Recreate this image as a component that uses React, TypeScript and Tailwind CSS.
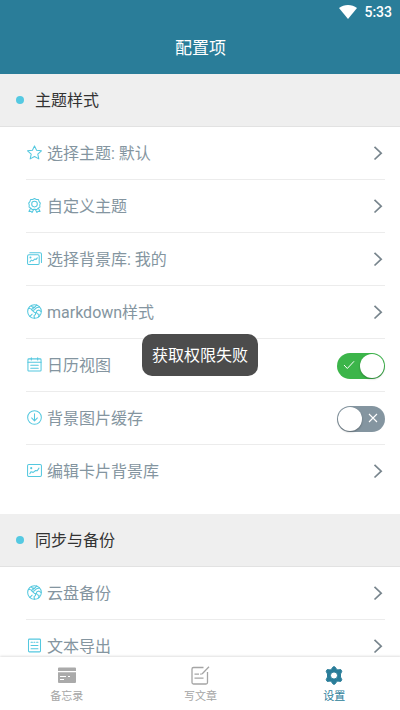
import type { ReactNode } from "react";

type IconName =
  | "star"
  | "badge"
  | "gallery"
  | "globe"
  | "calendar"
  | "download"
  | "picture"
  | "document";

interface SettingItem {
  label: string;
  icon: IconName;
  checked?: boolean; // rows with a value show a switch instead of the arrow
}

const themeItems: SettingItem[] = [
  { label: "选择主题: 默认", icon: "star" },
  { label: "自定义主题", icon: "badge" },
  { label: "选择背景库: 我的", icon: "gallery" },
  { label: "markdown样式", icon: "globe" },
  { label: "日历视图", icon: "calendar", checked: true },
  { label: "背景图片缓存", icon: "download", checked: false },
  { label: "编辑卡片背景库", icon: "picture" },
];

const backupItems: SettingItem[] = [
  { label: "云盘备份", icon: "globe" },
  { label: "文本导出", icon: "document" },
];

const iconShapes: Record<IconName, ReactNode> = {
  star: (
    <path d="M8 .9l2.200 4.700 5.200.6-3.900 3.500 1.100 5.100L8 12.200l-4.600 2.600 1.100-5.100L.6 6.200l5.200-.6z" />
  ),
  badge: (
    <>
      <path d="M8 .6l2 .9 2.200.2.700 2.100 1.300 1.700-.6 2 .2 2.200-1.900 1.100-1.300 1.500L8 11.900l-2.600.4-1.300-1.500-1.900-1.100.2-2.200-.6-2 1.300-1.700.7-2.100L6 1.500z" />
      <circle cx="8" cy="6.500" r="3" />
      <path d="M3.800 11L2 14.300l2.300-.1 1.100 1.300 1.700-3.300M12.200 11l1.800 3.300-2.300-.1-1.100 1.300-1.700-3.300" />
    </>
  ),
  gallery: (
    <>
      <rect x=".6" y="4" width="12.400" height="10.500" rx="1.500" />
      <path d="M3 1.800h10.900c.9 0 1.500.6 1.500 1.500v9M3 11.700l1.600-2 1.600.8 2.200-2 1.300.5 1.300-1.700" />
      <circle cx="3.700" cy="7" r=".5" />
    </>
  ),
  globe: (
    <>
      <circle cx="8" cy="8" r="7.300" />
      <path d="M1.700 4.500l2.600.7 1.200 1.600 2.200 1.900 1.600.7-.4 2-1.400 1 .4 2.700M4.600 1.900l1.600 1.700L8.800 3l1.500-2.100M13.300 3.300l-3 .6-2.300 2.200-1.500.5M5.300 5.500l3-2M15 8l-2.200-1.500-2.300.8-.6 1.700 1.500 1.700 1.500.3-.6 2.800M3.200 13.200l2.300-2.300" />
    </>
  ),
  calendar: (
    <>
      <rect x="1" y="2" width="14" height="13" rx="1" />
      <path d="M1 5.500h14M4.600.8v2.400M11.400.8v2.400M4 8.700h8M4 11.900h8" />
    </>
  ),
  download: (
    <>
      <circle cx="8" cy="8" r="7.300" />
      <path d="M8 4v7.500M4.900 8.500L8 11.600l3.100-3.100" />
    </>
  ),
  picture: (
    <>
      <rect x=".6" y="1.600" width="14.800" height="12.800" rx="1.400" />
      <path d="M3 11.400l1.200-2 2.400.6 2.600-2 1.700.3 1.900-2.800" />
      <circle cx="4.500" cy="5.500" r=".6" />
    </>
  ),
  document: (
    <>
      <rect x="1.600" y="1.200" width="12.800" height="13.600" rx="1" />
      <path d="M4.300 4.500h1.500M7.400 4.500h1M10.200 4.500h1.500M4.300 8h7.400M4.300 11.500h7.400" />
    </>
  ),
};

const ItemIcon = ({ name }: { name: IconName }) => (
  <svg
    viewBox="0 0 16 16"
    className="mr-[5.5px] mb-px ml-[0.5px] h-[15px] w-[15px] shrink-0 fill-none stroke-[#54c8df]"
    strokeWidth="1.1"
    strokeLinejoin="round"
    strokeLinecap="round"
  >
    {iconShapes[name]}
  </svg>
);

const Arrow = () => (
  <svg
    viewBox="0 0 10 16"
    className="h-4 w-2.5 fill-none stroke-[#78858d]"
    strokeWidth="1.7"
  >
    <path d="M1.500 1.800L8.200 8.200l-6.700 6.300" />
  </svg>
);

const Toggle = ({ checked }: { checked: boolean }) => (
  <button
    type="button"
    role="switch"
    aria-checked={checked}
    className={`mt-px flex h-[26px] w-12 items-center rounded-full px-px ${
      checked ? "justify-end bg-[#3cb54a]" : "bg-[#8495a0]"
    }`}
  >
    {checked && (
      <svg
        viewBox="0 0 12 10"
        className="mr-[5px] mb-px h-2.5 w-3 fill-none stroke-white"
        strokeWidth="1"
      >
        <path d="M1 5l3.300 3.500L11 1.300" />
      </svg>
    )}
    <span className="h-6 w-6 rounded-full bg-white shadow-[0_1px_2px_rgba(0,0,0,0.3)]" />
    {!checked && (
      <svg
        viewBox="0 0 10 10"
        className="mb-0.5 ml-[6px] h-2.5 w-2.5 fill-none stroke-white"
        strokeWidth="1.1"
      >
        <path d="M1 1l8 8M9 1L1 9" />
      </svg>
    )}
  </button>
);

const SectionTitle = ({ title }: { title: string }) => (
  <h2 className="flex h-[53px] items-center border-b border-[#e2e2e2] bg-[#efefef] pl-4 text-base text-[#333]">
    <span className="mr-[11px] h-2 w-2 rounded-full bg-[#55c9e2]" />
    <span className="pt-0.5">{title}</span>
  </h2>
);

const SettingList = ({ items }: { items: SettingItem[] }) => (
  <ul className="mr-[15px] ml-[26px]">
    {items.map((item) => (
      <li
        key={item.label}
        className="flex h-[53px] items-center border-b border-[#ececec] text-base text-[#8495a0] last:border-transparent"
      >
        <ItemIcon name={item.icon} />
        <span className="flex-1 pt-0.5">{item.label}</span>
        {item.checked === undefined ? (
          <span className="mr-0.5">
            <Arrow />
          </span>
        ) : (
          <Toggle checked={item.checked} />
        )}
      </li>
    ))}
  </ul>
);

const CardIcon = () => (
  <svg viewBox="0 0 20 20" className="h-5 w-5">
    <path
      className="fill-[#aaa]"
      d="M2 1.500h16a1 1 0 011 1V5H1V2.500a1 1 0 011-1zM1 6.300h18V16a1 1 0 01-1 1H2a1 1 0 01-1-1z"
    />
    <path className="fill-none stroke-white" d="M3 10.500h6M11 10.500h2M3 13.500h4" />
  </svg>
);

const WriteIcon = () => (
  <svg
    viewBox="0 0 20 20"
    className="h-5 w-5 fill-none stroke-[#a5a5a5]"
    strokeWidth="1.3"
  >
    <path d="M13.500 1.500h-10A1.500 1.500 0 002 3v13.500A1.500 1.500 0 003.500 18h12.500a1.500 1.500 0 001.500-1.500V6M19 .8l-7 7.200M4.500 8.200h4.500M10.200 8.200h1.500M4.500 12.200h9" />
  </svg>
);

// Six rounded teeth, one straight up
const GearIcon = () => (
  <svg viewBox="0 0 20 20" className="h-5 w-5">
    <path
      className="fill-[#2a7d99] stroke-[#2a7d99]"
      strokeLinejoin="round"
      fillRule="evenodd"
      d="M9.200.8h1.600l1.700 2.400 1.300.7 3-.3 1 1.700-1.300 2.700v3l1.300 2.700-1 1.700-3-.3-1.300.7-1.700 2.400H9.200l-1.700-2.400-1.300-.7-3 .3-1-1.700L3.500 11V8L2.200 5.300l1-1.700 3 .3 1.300-.7zM10 5.900a3.600 3.600 0 100 7.200 3.600 3.600 0 000-7.200z"
    />
  </svg>
);

const tabs = [
  { label: "备忘录", icon: <CardIcon />, active: false },
  { label: "写文章", icon: <WriteIcon />, active: false },
  { label: "设置", icon: <GearIcon />, active: true },
];

export default function App() {
  return (
    <div className="relative flex h-[710px] w-[400px] flex-col overflow-hidden bg-white font-['Roboto','Noto_Sans_CJK_SC',sans-serif]">
      <header className="h-[74px] shrink-0 bg-[#2a7d99] text-white">
        <div className="flex h-6 items-center justify-end gap-[7px] pr-2">
          <svg viewBox="0 0 18 14" className="mb-px h-3.5 w-[18px] fill-white">
            <path d="M0 3C5-1 13-1 18 3L9 14z" />
          </svg>
          <span className="text-sm font-medium">5:33</span>
        </div>
        <h1 className="flex h-[49px] items-center justify-center pl-px text-[17px]">
          配置项
        </h1>
      </header>

      <main className="min-h-0 flex-1 overflow-hidden">
        <SectionTitle title="主题样式" />
        <SettingList items={themeItems} />
        <div className="h-4" />
        <SectionTitle title="同步与备份" />
        <SettingList items={backupItems} />
      </main>

      <nav className="z-10 grid h-[53px] w-[401px] shrink-0 grid-cols-3 bg-white shadow-[0_-1px_2px_rgba(0,0,0,0.12)]">
        {tabs.map((tab) => (
          <div
            key={tab.label}
            className={`flex flex-col items-center pt-[9px] text-[11px] leading-[18px] ${
              tab.active ? "text-[#2a7d99]" : "text-[#a5a5a5]"
            }`}
          >
            {tab.icon}
            <span className="mt-0.5">{tab.label}</span>
          </div>
        ))}
      </nav>

      {/* Toast floating over the list */}
      <div className="absolute top-[334px] left-[142px] z-20 flex h-[42px] w-[116px] items-center justify-center rounded-[10px] bg-[#4c4c4c] pt-0.5 text-base text-white">
        获取权限失败
      </div>
    </div>
  );
}
